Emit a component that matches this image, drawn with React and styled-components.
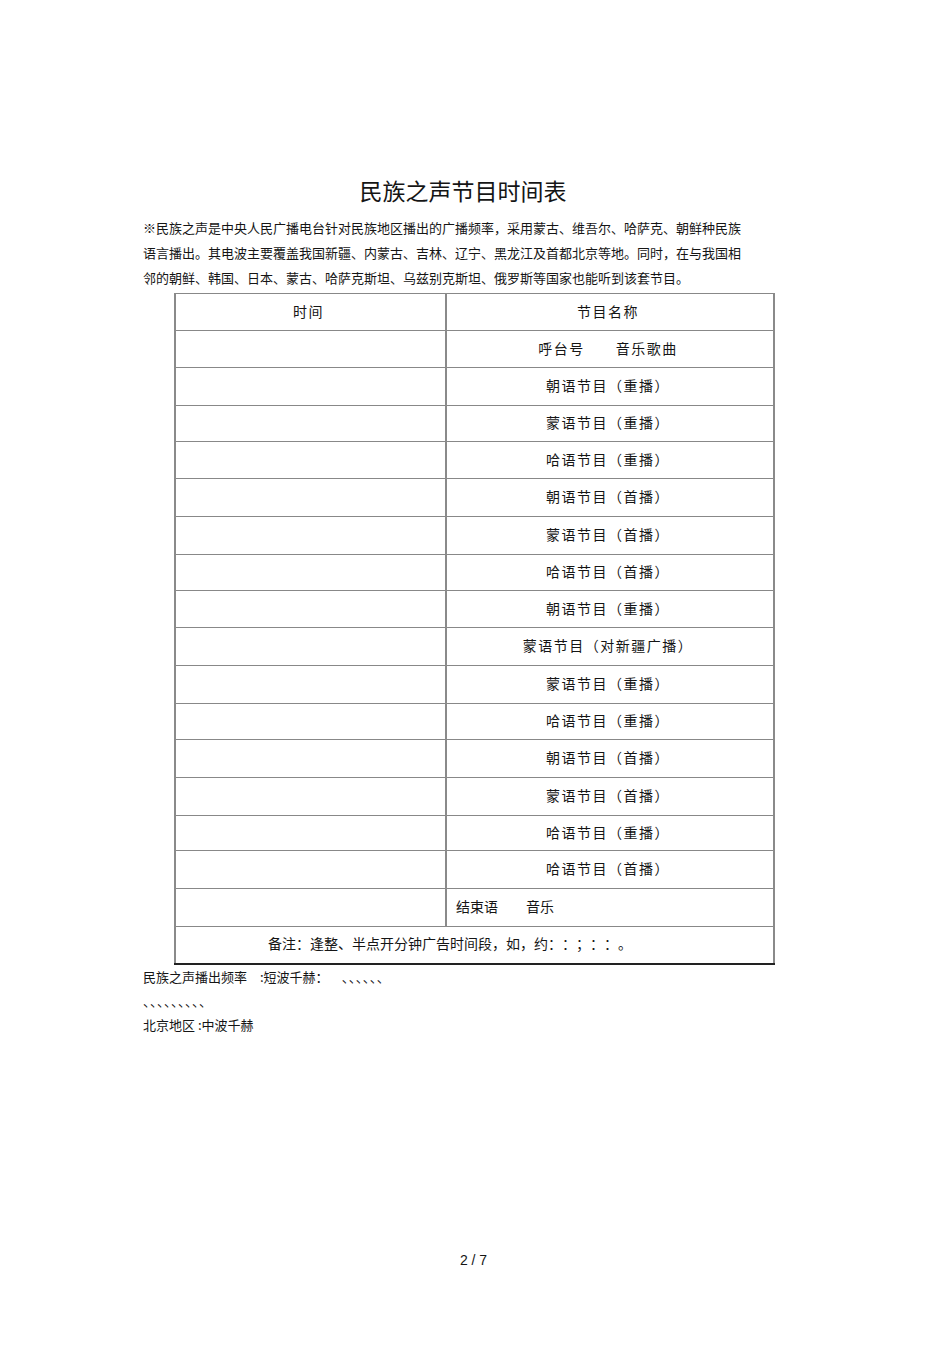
import React from 'react';
import styled, { createGlobalStyle } from 'styled-components';

const GlobalStyle = createGlobalStyle`
    html, body {
        margin: 0;
        padding: 0;
        background: #fff;
    }
    body {
        font-family: "Noto Sans CJK SC", "Liberation Sans", sans-serif;
        color: #151515;
        text-spacing-trim: space-all;
    }
`;

/**
 * Page
 */

const Page = styled.div`
    width: 950px;
    padding-top: 175px;
    box-sizing: border-box;
`;

const Title = styled.h1`
    margin: 0;
    font-size: 23px;
    font-weight: 400;
    line-height: 30px;
    text-align: center;
    padding-right: 24px;
`;

const Intro = styled.div`
    margin: 10px 0 0 143px;
    font-size: 13px;
    line-height: 25px;
`;

const Line = styled.div`
    white-space: nowrap;
`;

/**
 * Table
 */

const Table = styled.table`
    margin: 3px 0 0 174px;
    width: 601px;
    border-collapse: collapse;
    table-layout: fixed;
    font-size: 14px;
`;

const Cell = styled.td`
    border-top: 1px solid ${p => (p.dark ? '#222' : '#888')};
    border-bottom: 1px solid #888;
    border-left: 2px solid #8a8a8a;
    border-right: 2px solid #8a8a8a;
    padding: ${p => (p.align === 'left' ? `0 0 3px ${p.pad || 9}px` : '0 4px 3px 0')};
    text-align: ${p => p.align || 'center'};
    letter-spacing: ${p => (p.align === 'left' ? '0' : '1.5px')};
    vertical-align: middle;
    white-space: pre;
    line-height: 20px;
`;

const LastRow = styled.tr`
    td {
        border-bottom: 2px solid #222;
    }
`;

const heights = [37, 37, 38, 36, 37, 38, 38, 36, 37, 38, 38, 36, 38, 38, 35, 38, 38];

const programmes = [
    '呼台号　　音乐歌曲',
    '朝语节目（重播）',
    '蒙语节目（重播）',
    '哈语节目（重播）',
    '朝语节目（首播）',
    '蒙语节目（首播）',
    '哈语节目（首播）',
    '朝语节目（重播）',
    '蒙语节目（对新疆广播）',
    '蒙语节目（重播）',
    '哈语节目（重播）',
    '朝语节目（首播）',
    '蒙语节目（首播）',
    '哈语节目（重播）',
    '哈语节目（首播）'
];

const darkRows = [2, 5, 8, 10, 11, 12, 15];

/**
 * Notes
 */

const Notes = styled.div`
    margin: 0 0 0 143px;
    font-size: 13px;
    line-height: 24px;
`;

const Marks = styled.span`
    letter-spacing: -6px;
    margin-left: ${p => p.offset || 0}px;
`;

const Footer = styled.div`
    margin-top: 213px;
    text-align: center;
    font-family: "Liberation Sans", Arial, sans-serif;
    font-size: 14px;
    line-height: 20px;
    padding-right: 3px;
`;

const App = () => {
    return (
        <Page>
            <GlobalStyle />
            <Title>民族之声节目时间表</Title>
            <Intro>
                <Line>※民族之声是中央人民广播电台针对民族地区播出的广播频率，采用蒙古、维吾尔、哈萨克、朝鲜种民族</Line>
                <Line>语言播出。其电波主要覆盖我国新疆、内蒙古、吉林、辽宁、黑龙江及首都北京等地。同时，在与我国相</Line>
                <Line>邻的朝鲜、韩国、日本、蒙古、哈萨克斯坦、乌兹别克斯坦、俄罗斯等国家也能听到该套节目。</Line>
            </Intro>
            <Table>
                <colgroup>
                    <col style={{ width: '271px' }} />
                    <col />
                </colgroup>
                <tbody>
                    <tr style={{ height: heights[0] }}>
                        <Cell>时间</Cell>
                        <Cell>节目名称</Cell>
                    </tr>
                    {programmes.map((name, i) => (
                        <tr key={i} style={{ height: heights[i + 1] }}>
                            <Cell dark={darkRows.includes(i + 1)} />
                            <Cell dark={darkRows.includes(i + 1)}>{name}</Cell>
                        </tr>
                    ))}
                    <tr style={{ height: 38 }}>
                        <Cell dark />
                        <Cell dark align="left">结束语　　音乐</Cell>
                    </tr>
                    <LastRow style={{ height: 37 }}>
                        <Cell colSpan={2} align="left" pad={92}>备注：逢整、半点开分钟广告时间段，如，约：：；：：。</Cell>
                    </LastRow>
                </tbody>
            </Table>
            <Notes>
                <Line>民族之声播出频率　:短波千赫：<Marks offset={13}>、、、、、、</Marks></Line>
                <Line><Marks>、、、、、、、、、</Marks></Line>
                <Line>北京地区 :中波千赫</Line>
            </Notes>
            <Footer>2 / 7</Footer>
        </Page>
    );
};

export default App;
